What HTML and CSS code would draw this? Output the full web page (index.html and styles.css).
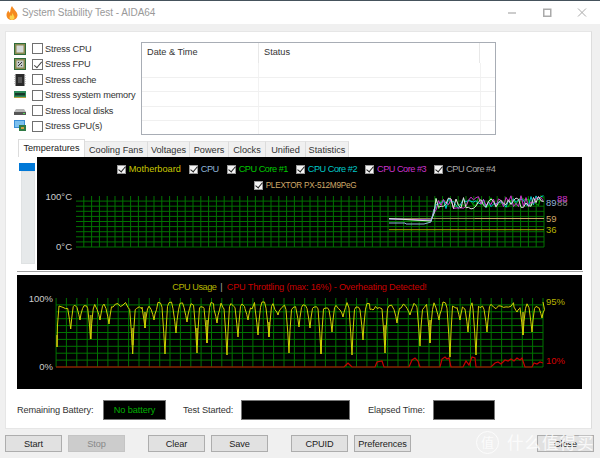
FILE: index.html
```html
<!DOCTYPE html>
<html lang="en">
<head>
    <meta charset="UTF-8">
    <title>System Stability Test - AIDA64</title>
    <link rel="stylesheet" href="styles.css">
</head>
<body>
<div class="window">
    <div class="titlebar">
        <svg class="flame" viewBox="0 0 12 14" width="12" height="14">
            <path d="M6 0C7 3 11 5 11.500 9C11.500 12 9 14 6 14C3 14 .5 12 .5 9C.5 7 1.500 5.500 2.500 4.500C2.700 6 3.300 6.500 4 6.500C4.500 4.500 4.500 2 6 0Z" fill="#f58a1f"/>
            <path d="M6.500 7C7 9 8.500 10 8.500 11.500C8.500 13 7.300 14 6 14C4.700 14 3.500 13 3.500 11.500C3.500 10.500 4.500 9.500 5 9C5.300 9.800 5.600 10 6 9.800C6 9 6 8 6.500 7Z" fill="#fdd34a"/>
        </svg>
        <span class="title-text">System Stability Test - AIDA64</span>
        <div class="win-controls">
            <svg viewBox="0 0 87 14" width="87" height="14">
                <path d="M8 7H16" stroke="#bbb" stroke-width="1.500"/>
                <rect x="43.750" y="3.250" width="7" height="7" fill="none" stroke="#aaa" stroke-width="1.500"/>
                <path d="M78 2.500L86 10.500M86 2.500L78 10.500" stroke="#aaa" stroke-width="1"/>
            </svg>
        </div>
    </div>

    <div class="panel">
        <div class="top-row">
            <ul class="stress-list">
                <li class="stress-item">
                    <svg class="dev-icon" viewBox="0 0 12 12"><rect width="12" height="12" fill="#2f6b3a"/><rect x="1" y="1" width="10" height="10" fill="#8a8a50"/><rect x="2.500" y="2.500" width="7" height="7" fill="#d5d8d8"/></svg>
                    <span class="check"></span><span>Stress CPU</span>
                </li>
                <li class="stress-item">
                    <svg class="dev-icon" viewBox="0 0 12 12"><rect width="12" height="12" fill="#2f6b3a"/><rect x="1" y="1" width="10" height="10" fill="#8a8a50"/><rect x="2.500" y="2.500" width="7" height="7" fill="#c4c8c8"/><path d="M4 8L8 4M4 4.500H5M7 7.500H8" stroke="#333"/></svg>
                    <span class="check checked"></span><span>Stress FPU</span>
                </li>
                <li class="stress-item">
                    <svg class="dev-icon" viewBox="0 0 12 12"><rect x="1.500" width="9" height="12" fill="#2b2b2b"/><rect x="4" y="3" width="4" height="6" fill="#555"/><path d="M1 1V11M11 1V11" stroke="#999" stroke-dasharray="1 1"/></svg>
                    <span class="check"></span><span>Stress cache</span>
                </li>
                <li class="stress-item">
                    <svg class="dev-icon" viewBox="0 0 12 12"><rect y="2" width="12" height="6" fill="#2c8a58"/><path d="M1 4H11V6.500H1Z" fill="#18382a"/><path d="M0 8.500H12" stroke="#b8a040"/></svg>
                    <span class="check"></span><span>Stress system memory</span>
                </li>
                <li class="stress-item">
                    <svg class="dev-icon" viewBox="0 0 12 12"><path d="M2 4H10L12 7H0Z" fill="#b4b4b4"/><rect y="7" width="12" height="3" fill="#555"/><rect x="9" y="8" width="2" height="1" fill="#5d5"/></svg>
                    <span class="check"></span><span>Stress local disks</span>
                </li>
                <li class="stress-item">
                    <svg class="dev-icon" viewBox="0 0 12 12"><rect width="11" height="8" fill="#3a8fd8"/><rect x="1" y="1" width="9" height="6" fill="#7cc0ee"/><rect x="5" y="5" width="7" height="6" fill="#2f7a45"/><rect x="7" y="7" width="3" height="2" fill="#c9a040"/></svg>
                    <span class="check"></span><span>Stress GPU(s)</span>
                </li>
            </ul>
            <div class="log-box">
                <div class="log-head">
                    <span class="col-date">Date &amp; Time</span>
                    <span class="col-status">Status</span>
                </div>
                <div class="log-rows">
                    <div class="log-row"></div>
                    <div class="log-row"></div>
                    <div class="log-row"></div>
                    <div class="log-row"></div>
                    <div class="log-row"></div>
                </div>
            </div>
        </div>

        <div class="tabs">
            <span class="tab active">Temperatures</span>
            <span class="tab tab-fans">Cooling Fans</span>
            <span class="tab tab-volt">Voltages</span>
            <span class="tab tab-pow">Powers</span>
            <span class="tab tab-clk">Clocks</span>
            <span class="tab tab-uni">Unified</span>
            <span class="tab tab-stat">Statistics</span>
        </div>

        <div class="temp-page">
            <div class="tree">
                <div class="tree-sel"></div>
                <div class="tree-track"></div>
            </div>
            <div class="temp-graph">
                <div class="legend">
                    <span class="leg c-mb"><i class="mini-check"></i>Motherboard</span>
                    <span class="leg leg-tight c-cpu"><i class="mini-check"></i>CPU</span>
                    <span class="leg leg-tight c-core1"><i class="mini-check"></i>CPU Core #1</span>
                    <span class="leg leg-tight c-core2"><i class="mini-check"></i>CPU Core #2</span>
                    <span class="leg leg-tight c-core3"><i class="mini-check"></i>CPU Core #3</span>
                    <span class="leg leg-tight c-core4"><i class="mini-check"></i>CPU Core #4</span>
                </div>
                <div class="legend legend-second">
                    <span class="leg c-ssd"><i class="mini-check"></i>PLEXTOR PX-512M9PeG</span>
                </div>
                <svg id="tempChart" class="chart temp-chart" viewBox="37 192 545 64"></svg>
            </div>
        </div>

        <div class="divider"></div>

        <div class="usage-graph">
            <div class="usage-title">
                <span class="c-usage">CPU Usage</span>
                <span class="c-sep">|</span>
                <span class="c-throttle">CPU Throttling (max: 16%) - Overheating Detected!</span>
            </div>
            <svg id="usageChart" class="chart usage-chart" viewBox="17 292 565 80"></svg>
        </div>

        <div class="info-row">
            <span class="info-label lbl-battery">Remaining Battery:</span>
            <span class="info-box box-battery">No battery</span>
            <span class="info-label lbl-started">Test Started:</span>
            <span class="info-box box-started"></span>
            <span class="info-label lbl-elapsed">Elapsed Time:</span>
            <span class="info-box box-elapsed"></span>
        </div>
    </div>

    <div class="button-row">
        <button class="btn">Start</button>
        <button class="btn btn-disabled">Stop</button>
        <button class="btn gap-left">Clear</button>
        <button class="btn">Save</button>
        <button class="btn gap-left">CPUID</button>
        <button class="btn">Preferences</button>
        <button class="btn btn-close">Close</button>
    </div>

    <div class="watermark">
        <span class="wm-circle">值</span>
        <span class="wm-text">什么值得买</span>
    </div>
</div>
<script src="graph.js"></script>
</body>
</html>
```

FILE: styles.css
```css
* {
    box-sizing: border-box;
}
body {
    margin: 0;
    font-family: "Liberation Sans", sans-serif;
    font-size: 9.2px;
    color: #333;
    background-color: #f0f0f0;
}
.window {
    position: relative;
    width: 600px;
    height: 458px;
    overflow: hidden;
    background-color: #f0f0f0;
}

/* title bar */
.titlebar {
    display: flex;
    align-items: center;
    height: 24px;
    background-color: #fff;
    border-top: 1px solid #45525c;
    padding-left: 6px;
}
.flame {
    margin-right: 4px;
}
.title-text {
    color: #999;
    font-size: 10px;
    letter-spacing: -0.05px;
}
.win-controls {
    display: flex;
    margin-left: auto;
    margin-right: 13px;
}

/* white panel */
.panel {
    width: 587px;
    height: 398px;
    margin: 7px 0 0 5px;
    padding: 9px 0 0 8px;
    background-color: #fff;
    border: 1px solid #e6e6e6;
    border-right-color: #ddd;
}
.top-row {
    display: flex;
    height: 94px;
}
.stress-list {
    list-style: none;
    margin: 0;
    padding: 0;
    width: 127px;
    letter-spacing: -0.15px;
}
.stress-item {
    display: flex;
    align-items: center;
    height: 15.5px;
}
.dev-icon {
    width: 12px;
    height: 12px;
    margin-right: 6px;
}
.check {
    position: relative;
    width: 11px;
    height: 11px;
    margin-right: 2px;
    background-color: #fff;
    border: 1px solid #707070;
}
.check.checked::after {
    content: "";
    position: absolute;
    left: 3px;
    top: 0;
    width: 3px;
    height: 7px;
    border: solid #444;
    border-width: 0 1px 1px 0;
    transform: rotate(40deg);
}

/* log table */
.log-box {
    width: 355px;
    height: 93px;
    margin-top: 1px;
    border: 1px solid #a8adb5;
    background-color: #fff;
}
.log-head {
    display: flex;
    height: 20px;
    line-height: 19px;
}
.log-head span {
    border-right: 1px solid #e8e8e8;
}
.col-date {
    width: 117px;
    padding-left: 5px;
}
.col-status {
    width: 221px;
    padding-left: 5px;
}
.log-rows {
    height: 71px;
    background: linear-gradient(#f2f2f2, #f2f2f2) 116px 0 / 1px 100% no-repeat,
                linear-gradient(#f2f2f2, #f2f2f2) 338px 0 / 1px 100% no-repeat;
}
.log-row {
    height: 14.500px;
    border-bottom: 1px solid #f0f0f0;
}
.log-row:last-child {
    border-bottom: none;
}

/* tabs */
.tabs {
    display: flex;
    align-items: flex-end;
    height: 17px;
    margin: 5px 0 0 4px;
}
.tab {
    height: 16px;
    line-height: 16px;
    text-align: center;
    background-color: #f0f0f0;
    border-right: 1px solid #dcdcdc;
    border-top: 1px solid #e4e4e4;
}
.tab.active {
    width: 67px;
    height: 18px;
    line-height: 16px;
    background-color: #fff;
    border: 1px solid #dcdcdc;
    border-bottom: none;
    color: #222;
}
.tab-fans { width: 63px; }
.tab-volt { width: 42px; }
.tab-pow { width: 39px; }
.tab-clk { width: 37px; }
.tab-uni { width: 40px; }
.tab-stat { width: 43px; }

/* temperatures page */
.temp-page {
    display: flex;
    height: 114px;
    margin-left: 3px;
}
.tree {
    width: 20px;
    padding: 6px 2px 0 2px;
}
.tree-sel {
    height: 8px;
    background-color: #0078d7;
}
.tree-track {
    width: 14px;
    height: 93px;
    margin-left: 2px;
    background-color: #e6e9ea;
    border: 1px solid #dfe2e3;
}
.temp-graph {
    width: 545px;
    height: 113px;
    background-color: #000;
}
.legend {
    display: flex;
    justify-content: center;
    gap: 8px;
    height: 18px;
    padding-top: 6px;
    padding-right: 7px;
    line-height: 14px;
}
.legend-second {
    height: 16px;
    padding-top: 5px;
    padding-right: 9px;
}
.leg {
    display: flex;
    align-items: center;
}
.leg-tight {
    letter-spacing: -0.5px;
}
.mini-check {
    position: relative;
    width: 9px;
    height: 9px;
    margin-right: 3px;
    background-color: #f4f4f4;
    border: 1px solid #999;
}
.mini-check::after {
    content: "";
    position: absolute;
    left: 2px;
    top: -1px;
    width: 3px;
    height: 6px;
    border: solid #222;
    border-width: 0 1px 1px 0;
    transform: rotate(40deg);
}
.c-mb { color: #c8c800; }
.c-cpu { color: #8fb4d9; }
.c-core1 { color: #00c800; }
.c-core2 { color: #00c8c8; }
.c-core3 { color: #cc33cc; }
.c-core4 { color: #aaa; }
.c-ssd {
    color: #cfa868;
    font-size: 8.2px;
    letter-spacing: -0.25px;
}

.chart {
    display: block;
    font-family: "Liberation Sans", sans-serif;
    font-size: 9.5px;
}
.temp-chart {
    width: 545px;
    height: 64px;
}
.divider {
    height: 4px;
    margin-left: 3px;
    border-top: 1px solid #a0a0a0;
    width: 566px;
}
.usage-graph {
    width: 565px;
    height: 114px;
    margin-left: 3px;
    background-color: #000;
}
.usage-title {
    display: flex;
    justify-content: center;
    gap: 4px;
    height: 17px;
    padding-top: 5px;
    line-height: 14px;
}
.c-usage {
    color: #b4b400;
    letter-spacing: -0.5px;
}
.c-sep { color: #aaa; }
.c-throttle {
    color: #c80000;
    letter-spacing: -0.2px;
}
.usage-chart {
    width: 565px;
    height: 80px;
}

/* bottom info row */
.info-row {
    display: flex;
    align-items: center;
    height: 20px;
    margin: 11px 0 0 3px;
    letter-spacing: -0.1px;
}
.info-box {
    display: block;
    height: 20px;
    line-height: 18px;
    text-align: center;
    background-color: #000;
    border: 1px solid #777;
    color: #00b000;
}
.lbl-battery { width: 86px; }
.box-battery { width: 63px; }
.lbl-started { width: 58px; margin-left: 17px; }
.box-started { width: 109px; }
.lbl-elapsed { width: 65px; margin-left: 18px; }
.box-elapsed { width: 62px; }

/* buttons */
.button-row {
    display: flex;
    gap: 6px;
    margin: 6px 0 0 5px;
}
.btn {
    width: 57px;
    height: 17px;
    padding: 0;
    font-family: "Liberation Sans", sans-serif;
    font-size: 9.2px;
    letter-spacing: -0.1px;
    color: #222;
    background-color: #e1e1e1;
    border: 1px solid #adadad;
}
.btn-disabled {
    color: #888;
    background-color: #ccc;
    border-color: #c4c4c4;
}
.gap-left {
    margin-left: 17px;
}
.btn-close {
    margin-left: 120px;
}

/* site watermark over the corner */
.watermark {
    position: absolute;
    left: 476px;
    top: 431px;
    display: flex;
    align-items: center;
    gap: 8px;
    height: 23px;
    color: rgba(255, 255, 255, 0.8);
    font-family: "Noto Sans CJK SC", sans-serif;
    line-height: 1;
}
.wm-circle {
    width: 23px;
    height: 23px;
    line-height: 20px;
    text-align: center;
    border-radius: 50%;
    border: 1.5px solid rgba(255, 255, 255, 0.8);
    font-size: 13px;
}
.wm-text {
    font-size: 16.5px;
    letter-spacing: 1px;
}
```

FILE: graph.js
```js
// Draws the two sensor graphs. All coordinates are page pixels, the viewBox of each svg lines up with them.
const NS = "http://www.w3.org/2000/svg";

// small seeded random so the noise is the same on every load
let seed = 7;
function rnd() {
    seed = (seed * 16807) % 2147483647;
    return seed / 2147483647;
}

function line(svg, pts, color, width) {
    const el = document.createElementNS(NS, "polyline");
    el.setAttribute("points", pts.map(p => p[0].toFixed(1) + "," + p[1].toFixed(1)).join(" "));
    el.setAttribute("fill", "none");
    el.setAttribute("stroke", color);
    el.setAttribute("stroke-width", width || 1);
    svg.appendChild(el);
}

function label(svg, x, y, txt, color, anchor) {
    const el = document.createElementNS(NS, "text");
    el.setAttribute("x", x);
    el.setAttribute("y", y);
    el.setAttribute("fill", color);
    if (anchor) el.setAttribute("text-anchor", anchor);
    el.textContent = txt;
    svg.appendChild(el);
}

function grid(svg, x0, x1, y0, y1, dx, dy) {
    let d = "";
    for (let x = x1; x >= x0; x -= dx) d += "M" + x.toFixed(1) + " " + y0 + "V" + y1;
    for (let y = y1; y > y0 + 2; y -= dy) d += "M" + x0 + " " + y.toFixed(1) + "H" + x1;
    const el = document.createElementNS(NS, "path");
    el.setAttribute("d", d);
    el.setAttribute("stroke", "#007300");
    el.setAttribute("fill", "none");
    svg.appendChild(el);
}

// temperatures
const temp = document.getElementById("tempChart");
grid(temp, 76, 544, 197, 248, 7.8, 5.1);

function noisy(base, amp) {
    const pts = [[389, base[0]], [431, base[1]], [434, 214]];
    for (let x = 436; x <= 544; x += 2.5) {
        pts.push([x, 205 + (x - 436) * -0.03 + (rnd() - 0.5) * amp]);
    }
    return pts;
}
line(temp, [[389, 230.7], [544, 230.7]], "#a8a800");
line(temp, [[389, 219.5], [475, 219.5]], "#8d8a50");
line(temp, [[475, 219.5], [544, 219.5]], "#c8a868");
line(temp, noisy([220, 222], 12), "#00b400");
line(temp, noisy([220, 221], 12), "#00c8c8");
line(temp, noisy([220, 221], 12), "#cc33cc");
line(temp, noisy([219.500, 222], 12), "#dddddd");
line(temp, [[389, 224], [405, 224], [406, 225], [424, 225], [431, 223], [434, 210]], "#8fb4d9");

label(temp, 72, 201, "100°C", "#ccc", "end");
label(temp, 72, 251, "0°C", "#ccc", "end");
label(temp, 546, 207, "89", "#8fb4d9");
label(temp, 557, 207, "88", "#888");
label(temp, 557, 203, "88", "#cc33cc");
label(temp, 546, 223, "59", "#cfa868");
label(temp, 546, 234, "36", "#b4b400");

// cpu usage
const usage = document.getElementById("usageChart");
grid(usage, 56, 543, 298, 367, 10.36, 6.9);

// [x, lowest y] of every dip in the usage line, read off the screenshot
const dips = [[70.7, 329], [80, 320], [90.7, 339], [100, 320], [109, 324], [132.7, 354], [145, 328], [154, 320], [165, 354],
    [176, 333], [187, 322], [197, 353], [207, 343], [217, 323], [227, 355], [238, 337], [248, 320], [258, 335], [269, 337],
    [278, 315], [289, 353], [299, 327], [310, 328], [321, 354], [332, 332], [343, 317], [352, 355], [363, 340], [373, 310],
    [385, 353], [397, 323], [410, 315], [420, 346], [430, 343], [439, 320], [450, 357], [460, 320], [468, 332], [476, 355],
    [487, 332], [517, 312], [523, 335], [532, 332], [542, 318]];

const cpu = [[57, 347], [57.5, 325], [59, 306]];
let px = 59;
dips.forEach(d => {
    for (let x = px + 4; x < d[0] - 3; x += 2.5) {
        cpu.push([x, 302 + rnd() * 7]);
    }
    cpu.push([d[0] - 3, 307 + rnd() * 3]);
    cpu.push([d[0] - 1.2, 308 + (d[1] - 308) * 0.55]);
    cpu.push([d[0], d[1]]);
    cpu.push([d[0] + 1, 308 + (d[1] - 308) * 0.5]);
    cpu.push([d[0] + 2.5, 306 + rnd() * 4]);
    px = d[0];
});
cpu.push([543, 302]);

// the darker thick part some dips have
[[57, 347, 335], [90.7, 339, 315], [132.7, 345, 328], [145, 328, 312], [197, 345, 328], [207, 343, 320], [269, 337, 322],
    [321, 354, 340], [385, 345, 325], [430, 343, 320], [523, 335, 312]].forEach(b => {
    line(usage, [[b[0], b[1]], [b[0], b[2]]], "#8d8d10", 2);
});
line(usage, cpu, "#d2d200");

const bumps = [[344, 367], [346, 365], [348, 363], [350, 365], [352, 367], [375, 367], [377, 362], [382, 361], [384, 367],
    [409, 367], [412, 360], [415, 358], [418, 361], [420, 367], [440, 367], [442, 359], [445, 357], [447, 359], [449, 358],
    [451, 367], [463, 367], [466, 361], [469, 365], [472, 357], [475, 358], [476, 367], [491, 367], [495, 363], [498, 362],
    [501, 364], [505, 360], [508, 361], [511, 359], [514, 361], [517, 358], [520, 360], [522, 358], [525, 367], [532, 367],
    [534, 363], [537, 364], [540, 362], [543, 363]];
line(usage, [[56, 367]].concat(bumps), "#c80000", 1.2);

label(usage, 53, 302, "100%", "#ccc", "end");
label(usage, 53, 370, "0%", "#ccc", "end");
label(usage, 546, 305, "95%", "#b4b400");
label(usage, 546, 364, "10%", "#d80000");
```
